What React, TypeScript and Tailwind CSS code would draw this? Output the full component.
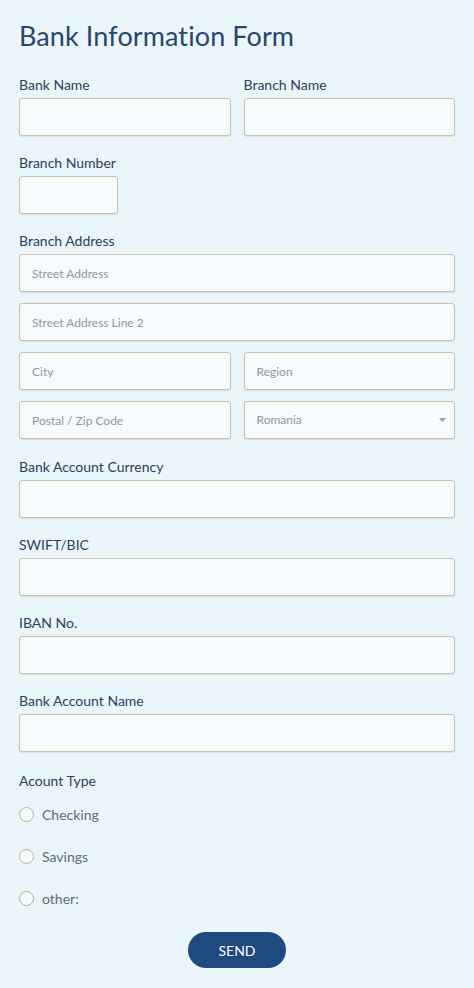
import React from 'react'

const inputCls =
    'block w-full h-[38px] rounded-[3px] border border-[#c9c0a8] bg-[#f6fbfe] px-3 text-[12px] text-[#5a6578] placeholder:text-[#8d97a8] shadow-[0_1px_1px_rgba(120,110,80,0.15)] outline-none'

const Label = ({ children }: { children: React.ReactNode }) => (
    <p className="text-[14px] leading-[20px] text-[#2a3f5f] mb-[3px]">{children}</p>
)

const Radio = ({ label }: { label: string }) => (
    <label className="flex items-center gap-[8px] h-[20px]">
        <span className="w-[15px] h-[15px] rounded-full border border-[#b9ae92] bg-[#f6fbfe]" />
        <span className="text-[14px] text-[#5d6b80]">{label}</span>
    </label>
)

export default function App() {
    return (
        <div
            className="w-[474px] min-h-[988px] bg-[#eaf6fc] px-[19px] pt-[20px] pb-[20px]"
            style={{ fontFamily: 'Lato, "Noto Sans", sans-serif' }}
        >
            <h1 className="text-[27px] leading-[32px] tracking-[0.1px] text-[#27466f] mb-[23px]">Bank Information Form</h1>

            <div className="grid grid-cols-2 gap-[13px]">
                <div>
                    <Label>Bank Name</Label>
                    <input className={inputCls} />
                </div>
                <div>
                    <Label>Branch Name</Label>
                    <input className={inputCls} />
                </div>
            </div>

            <div className="mt-[17px]">
                <Label>Branch Number</Label>
                <input className={inputCls + ' !w-[99px]'} />
            </div>

            <div className="mt-[17px]">
                <Label>Branch Address</Label>
                <div className="flex flex-col gap-[11px]">
                    <input className={inputCls} placeholder="Street Address" />
                    <input className={inputCls} placeholder="Street Address Line 2" />
                    <div className="grid grid-cols-2 gap-[13px]">
                        <input className={inputCls} placeholder="City" />
                        <input className={inputCls} placeholder="Region" />
                    </div>
                    <div className="grid grid-cols-2 gap-[13px]">
                        <input className={inputCls} placeholder="Postal / Zip Code" />
                        <div className="relative">
                            <div className={inputCls + ' flex items-center text-[#8d97a8]'}>Romania</div>
                            <svg
                                className="absolute right-[9px] top-[17px]"
                                width="7"
                                height="4"
                                viewBox="0 0 7 4"
                            >
                                <path d="M0 0 L7 0 L3.5 4 Z" fill="#9aa3b0" />
                            </svg>
                        </div>
                    </div>
                </div>
            </div>

            <div className="mt-[18px]">
                <Label>Bank Account Currency</Label>
                <input className={inputCls} />
            </div>
            {['SWIFT/BIC', 'IBAN No.', 'Bank Account Name'].map((l) => (
                <div key={l} className="mt-[17px]">
                    <Label>{l}</Label>
                    <input className={inputCls} />
                </div>
            ))}

            <div className="mt-[19px]">
                <Label>Acount Type</Label>
                <div className="flex flex-col gap-[22px] mt-[13px]">
                    <Radio label="Checking" />
                    <Radio label="Savings" />
                    <Radio label="other:" />
                </div>
            </div>

            <div className="flex justify-center mt-[24px]">
                <button className="w-[98px] h-[36px] rounded-full bg-[#1f4a80] text-white text-[14px]">SEND</button>
            </div>
        </div>
    )
}
